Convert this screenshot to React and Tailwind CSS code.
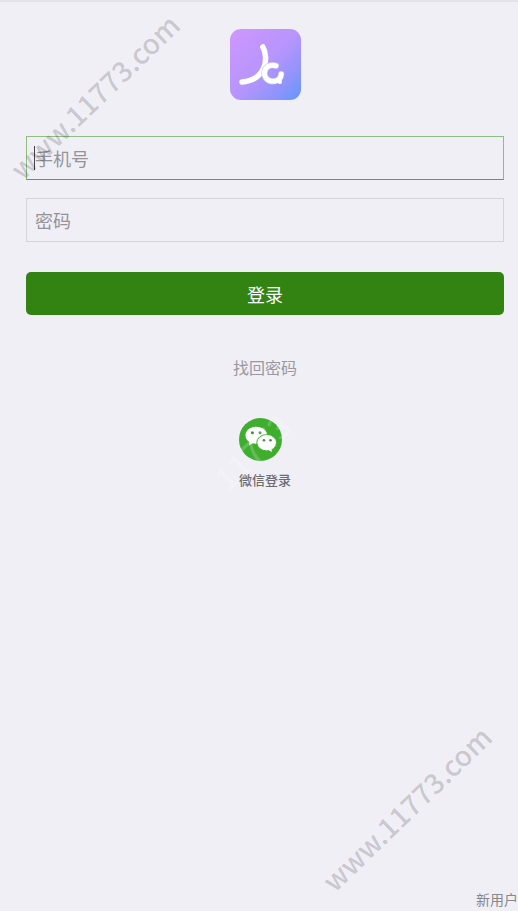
import React, { useState } from "react";

// app logo
const AppLogo = () => (
  <svg viewBox="0 0 71 71" className="block w-[71px] h-[71px]" aria-hidden="true">
    <defs>
      <linearGradient id="logo-bg" x1="0" y1="0" x2="1" y2="1">
        <stop offset="0" stopColor="#cf97fc" />
        <stop offset="0.5" stopColor="#b795fc" />
        <stop offset="0.78" stopColor="#8f94fb" />
        <stop offset="1" stopColor="#5f98fd" />
      </linearGradient>
    </defs>
    <rect width="71" height="71" rx="11" fill="url(#logo-bg)" />
    <g fill="none" strokeLinecap="round" strokeLinejoin="round">
      <path
        d="M32.8 18 C36 23 36.5 32 34 38 C31 46 25 52 12 53"
        stroke="#fff"
        strokeWidth="5.5"
      />
      <path
        d="M46 36.8 C40 34.8 34.5 38 34.5 44.5 C34.7 51 41 53.5 46 51.8 C49.5 50.5 51.2 48 51.2 45"
        stroke="#cdbff5"
        strokeWidth="6.2"
      />
      <path
        d="M46 36.8 C40 34.8 34.5 38 34.5 44.5 C34.7 51 41 53.5 46 51.8 C49.5 50.5 51.2 48 51.2 45"
        stroke="#fff"
        strokeWidth="5"
      />
      <path d="M48 51 L50 53" stroke="#fff" strokeWidth="4" />
    </g>
  </svg>
);

const WechatLogo = () => (
  <svg viewBox="0 0 43 43" className="block w-[43px] h-[43px]" aria-hidden="true">
    <circle cx="21.5" cy="21.5" r="21.5" fill="#3fad2e" />
    <path
      d="M17.3 8.8c-6 0-10.8 3.7-10.8 8.6 0 2.8 1.5 5.1 4 6.7l-.7 3.3 3.8-2.1c1.2.3 2.4.5 3.7.5 6 0 10.9-3.8 10.9-8.4s-4.9-8.6-10.9-8.6z"
      fill="#fff"
    />
    <ellipse
      cx="27.7"
      cy="24.7"
      rx="9.9"
      ry="8.2"
      fill="#fff"
      stroke="#3fad2e"
      strokeWidth="1"
    />
    <path d="M28.5 31.5l4.5 2.6-.7-4z" fill="#fff" />
    <g fill="#3f8f36">
      <circle cx="13.4" cy="14.7" r="1.5" />
      <circle cx="21" cy="14.7" r="1.5" />
      <circle cx="25" cy="22.3" r="1.3" />
      <circle cx="31.5" cy="22.3" r="1.3" />
    </g>
  </svg>
);

const Watermark = ({ children, className }) => (
  <span
    className={`absolute -translate-x-1/2 -translate-y-1/2 -rotate-44 font-medium leading-none whitespace-nowrap pointer-events-none select-none ${className}`}
    aria-hidden="true"
  >
    {children}
  </span>
);

const App = () => {
  const [phone, setPhone] = useState("");
  const [password, setPassword] = useState("");

  return (
    <main className="relative min-h-screen flex flex-col overflow-hidden bg-[#f0eff6] border-t-2 border-[#e4e3ea] font-['Noto_Sans_CJK_SC',sans-serif]">
      <form
        className="flex flex-col items-center pt-[27px] pl-[26px] pr-[14px]"
        onSubmit={(e) => e.preventDefault()}
      >
        <AppLogo />

        <div className="relative w-full mt-9">
          <input
            type="tel"
            aria-label="手机号"
            placeholder="手机号"
            value={phone}
            onChange={(e) => setPhone(e.target.value)}
            className="block w-full h-11 px-2 border border-[#8fbe85] border-b-[#5f9c4c] text-lg text-[#333] placeholder:text-[#949398] outline-none caret-transparent"
          />
          {!phone && (
            <span className="absolute left-2 top-2.5 w-px h-6 bg-[#444]" />
          )}
        </div>

        <input
          type="password"
          aria-label="密码"
          placeholder="密码"
          value={password}
          onChange={(e) => setPassword(e.target.value)}
          className="block w-full h-11 mt-[18px] px-2 border border-[#d5d4da] text-lg text-[#333] placeholder:text-[#949398] outline-none"
        />

        <button
          type="submit"
          className="w-full h-[43px] mt-[30px] rounded-[5px] bg-[#328312] text-lg text-white"
        >
          登录
        </button>

        <a href="#reset" className="mt-10 text-base text-[#99989d]">
          找回密码
        </a>

        <button type="button" className="flex flex-col items-start mt-[39px]">
          <WechatLogo />
          <span className="mt-[9px] text-[13px] leading-5 font-medium text-[#6b6a6f]">
            微信登录
          </span>
        </button>
      </form>

      <a
        href="#register"
        className="mt-auto mb-[2px] self-end text-sm text-[#88878c]"
      >
        新用户
      </a>

      <Watermark className="left-[94px] top-[94px] text-[28px] text-black/18">
        www.11773.com
      </Watermark>
      <Watermark className="left-[251px] top-[449px] text-[32px] text-white/20">
        11773
      </Watermark>
      <Watermark className="left-[406px] top-[806px] text-[28px] text-black/18">
        www.11773.com
      </Watermark>
    </main>
  );
};

export default App;
